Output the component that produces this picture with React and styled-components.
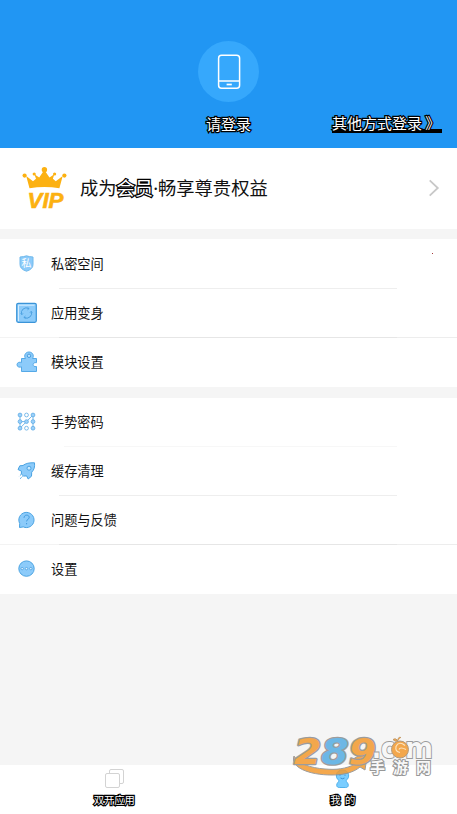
import React, { useState } from 'react';
import styled, { createGlobalStyle, css } from 'styled-components';

const GlobalStyle = createGlobalStyle`
  * {
    box-sizing: border-box;
  }

  body {
    margin: 0;
    background: #f5f5f5;
    font-family: "Noto Sans CJK SC", "Noto Sans", sans-serif;
    color: #111111;
  }

  button {
    font-family: inherit;
    border: none;
    background: none;
    padding: 0;
    cursor: pointer;
  }
`;

const outlined = css`
  color: #ffffff;
  -webkit-text-stroke: ${props => props.$stroke || 2.4}px #000000;
  paint-order: stroke fill;
`;

const Page = styled.div`
  position: relative;
  display: flex;
  flex-direction: column;
  width: 100%;
  height: 814px;
  overflow: hidden;
  background: #f5f5f5;
`;

const Header = styled.header`
  display: grid;
  grid-template-columns: 1fr 62px 1fr;
  grid-template-rows: 61px 20px;
  row-gap: 12px;
  justify-items: center;
  align-items: center;
  height: 148px;
  padding-top: 41px;
  align-content: start;
  background: #2196f3;
`;

const Avatar = styled.div`
  grid-column: 2;
  display: flex;
  align-items: center;
  justify-content: center;
  width: 61px;
  height: 61px;
  border-radius: 50%;
  background: #36a8fc;
`;

const LoginText = styled.button`
  grid-column: 2;
  grid-row: 2;
  ${outlined}
  font-size: 15px;
  line-height: 20px;
  white-space: nowrap;
`;

const OtherLogin = styled.button`
  grid-column: 3;
  grid-row: 2;
  justify-self: end;
  margin-right: 15px;
  height: 17px;
  width: 110px;
  border-bottom: 4px solid #000000;
  ${outlined}
  font-size: 15px;
  line-height: 14px;
  text-align: left;
  white-space: nowrap;
`;

const VipBar = styled.section`
  display: flex;
  align-items: center;
  height: 81px;
  padding: 0 17px 2px 22px;
  background: #ffffff;
`;

const VipTitle = styled.div`
  flex: 1;
  margin-left: 13px;
  font-size: 18.3px;
  line-height: 28px;
  white-space: nowrap;
`;

const Highlight = styled.span`
  ${outlined}
`;

const MidDot = styled.span`
  font-family: "Noto Sans", sans-serif;
`;

const Group = styled.section`
  margin-top: ${props => props.$gap}px;
  background: #ffffff;
`;

const Row = styled.div`
  display: flex;
  align-items: center;
  height: ${props => props.$height}px;
  padding-left: 15px;
  padding-bottom: ${props => (props.$line === 'none' ? 1 : 0)}px;
  border-bottom: ${props => (props.$line === 'none' ? 'none' : '1px solid transparent')};
  border-image: ${props => {
    if (props.$line === 'short') return 'linear-gradient(90deg, #ffffff 60px, #eeeeee 60px, #eeeeee 396px, #ffffff 396px) 1';
    if (props.$line === 'faint') return 'linear-gradient(90deg, #ffffff 65px, #f7f7f7 65px, #f7f7f7 396px, #ffffff 396px) 1';
    if (props.$line === 'full') return 'linear-gradient(90deg, #f3f3f3 60px, #e6e6e6 60px, #e6e6e6 396px, #ededed 396px) 1';
    return 'none';
  }};
`;

const RowLabel = styled.span`
  margin-left: 13px;
  flex: 1;
  font-size: 13.2px;
  line-height: 20px;
`;

const Dot = styled.i`
  width: 1px;
  height: 1px;
  margin: 0 24px 21px 0;
  background: #a33a3a;
`;

const TabBar = styled.nav`
  display: grid;
  grid-template-columns: 1fr 1fr;
  height: 49px;
  margin-top: auto;
  background: #ffffff;
`;

const Tab = styled.button`
  display: flex;
  flex-direction: column;
  align-items: center;
  padding-top: 3px;
`;

const TabLabel = styled.span`
  ${outlined}
  margin-top: 4px;
  font-size: 10.3px;
  line-height: 14px;
  white-space: pre;
`;

const Watermark = styled.svg`
  position: absolute;
  left: 288px;
  top: 725px;
  opacity: 0.85;
  pointer-events: none;
`;

const PhoneIcon = () => (
  <svg width="24" height="36" viewBox="0 0 24 36" fill="none" stroke="#fff" strokeWidth="1.5">
    <rect x="1.6" y="1.3" width="21" height="33" rx="3" />
    <path d="M2 27h20.5" />
    <path d="M9.6 30.5h5.2" strokeWidth="1.7" />
  </svg>
);

const VipIcon = () => (
  <svg width="45" height="44" viewBox="0 0 45 44" fill="#fcb111">
    <path d="M7.5 22.3 4.2 10l6.8 5.3 3-2.500-1.600-4.600 4.800 3.400L22.300 4l5.200 7.600 4.800-3.400-1.400 4.600 2.900 2.500 6.900-5.300-3.300 12.300Q22.500 19.500 7.500 22.300Z" />
    <circle cx="22.4" cy="3.7" r="2.7" />
    <circle cx="2.6" cy="9.6" r="2.1" />
    <circle cx="42.4" cy="9.6" r="2.1" />
    <circle cx="12.2" cy="8" r="1.6" />
    <circle cx="32.6" cy="8" r="1.6" />
    <text
      x="5.5"
      y="42"
      textLength="36"
      lengthAdjust="spacingAndGlyphs"
      fontFamily="Liberation Sans, sans-serif"
      fontSize="22"
      fontWeight="700"
      fontStyle="italic"
      stroke="#fcb111"
      strokeWidth=".6"
    >
      VIP
    </text>
  </svg>
);

const Chevron = () => (
  <svg width="12" height="18" viewBox="0 0 12 18" fill="none" stroke="#c8c8c8" strokeWidth="1.8">
    <path d="M1.7 1.3 9.8 9l-8.1 7.7" />
  </svg>
);

const RowSvg = ({ children }) => (
  <svg width="23" height="24" viewBox="0 0 23 24" fill="#8ccbfa" stroke="#4aa3e2" strokeWidth="1">
    {children}
  </svg>
);

const ShieldIcon = () => (
  <RowSvg>
    <path d="M5 5Q9 4.800 11.500 3.800 14 4.800 18 5v7.500q0 4.700-6.500 6.700-6.500-2-6.500-6.700Z" stroke="#70b9ec" />
    <text x="11.5" y="15.2" textAnchor="middle" fontSize="10" fill="#fff" stroke="none">私</text>
  </RowSvg>
);

const SwapIcon = () => (
  <RowSvg>
    <rect x="1.7" y="2.3" width="19.6" height="19" rx="1.5" stroke="#3b94d8" strokeWidth="1.2" />
    <path d="M3.500 20V4.200h16" fill="none" stroke="#d4edff" />
    <path d="M6.800 13.500a4.800 4.800 0 0 1 7-5.900M16.200 10.500a4.800 4.800 0 0 1-7 5.900" fill="none" stroke="#4a9fdf" />
    <path d="m12.500 6.300 1.700 1.300-1.800 1.300M10.500 15l-1.700 1.400 1.900 1.300M5.600 12.300l1.200 1.400 1.300-1.300M14.900 11.700l1.300-1.400 1.200 1.400" fill="none" stroke="#4a9fdf" strokeWidth=".8" />
  </RowSvg>
);

const PuzzleIcon = () => (
  <RowSvg>
    <path
      d="M6.500 8.500h4C8.500 5.500 10.500 2 14 2s5.500 3.500 3.500 6.500h4v4.200c-4.500-1-4.500 4.800 0 3.800v5h-15v-4.700c-1.500.8-4.500.4-4.500-2.100s3-3 4.500-2.100Z"
      stroke="#55a9e7"
    />
    <circle cx="14" cy="5.800" r="1.700" fill="#b9e1ff" stroke="#4197da" strokeWidth=".9" />
  </RowSvg>
);

const GestureIcon = () => (
  <RowSvg>
    <path d="M5 5v13M18 5v13M5 18.200 18 5M5 11.600h6.500" fill="none" stroke="#75b7e8" />
    {[5, 11.6, 18.2].map(y =>
      [5, 11.5, 18].map(x => (
        <circle
          key={`${x}-${y}`}
          cx={x}
          cy={y}
          r="1.9"
          fill={x === 11.5 && y !== 11.6 ? '#fff' : '#9bd0fa'}
          stroke="#60ace4"
          strokeWidth=".8"
        />
      ))
    )}
  </RowSvg>
);

const RocketIcon = () => (
  <RowSvg>
    <path d="M19.500 3.800c-5-.3-9 .6-11.500 2.700L4.800 6.800 3 10.500l3.500 1.700-.2 2.900 2.400 2 2.900-.2 1.600 3.100 3.300-2.800.2-4c2.500-2.400 3.200-5.300 2.800-9.400Z" />
    <circle cx="14" cy="9.200" r="2" fill="#c8e8ff" />
    <path d="m6 15.500-1.700 1.700M7.500 17.500 5 19.800" strokeDasharray="1.5 .7" />
  </RowSvg>
);

const QuestionIcon = () => (
  <RowSvg>
    <path d="M4.500 19.500l.2-4A7.600 7.600 0 1 1 8.300 18.900Z" />
    <path d="M9 9.800c0-3.600 5.200-3.400 5.200-.4 0 2-2.600 1.900-2.600 4M11.600 15v1.300" fill="none" stroke="#3f98dc" />
  </RowSvg>
);

const MoreIcon = () => (
  <RowSvg>
    <circle cx="11.5" cy="11.6" r="7.7" />
    {[7.2, 11.5, 15.8].map(x => (
      <circle key={x} cx={x} cy="11.6" r="1.2" fill="#e4f4ff" stroke="#3f98dc" strokeWidth=".7" />
    ))}
  </RowSvg>
);

const AppsIcon = () => (
  <svg width="21" height="21" viewBox="0 0 21 21" fill="#fff" stroke="#d3d3d3">
    <rect x="5.5" y="1.5" width="14" height="14" rx="1.5" />
    <rect x="1.5" y="5.500" width="14" height="14" rx="1.5" />
  </svg>
);

const PersonIcon = () => (
  <svg width="21" height="21" viewBox="0 0 21 21" fill="#79cdff" stroke="#4fb0ea">
    <path d="M7 12.500C2.800 10 3.300 2 10.500 2s7.700 8 3.500 10.500c.1 1.500 2.500 2.500 2.300 4.900-.2 1.500-1.100 2.100-2.600 2.100H7.300c-1.500 0-2.400-.6-2.600-2.100C4.500 15 6.900 14 7 12.500Z" />
    <path d="M8 6.700v1M13 6.700v1M8.500 10q2 1.500 4 0" fill="none" stroke="#398fd0" />
  </svg>
);

const SiteLogo = () => (
  <Watermark width="160" height="60" viewBox="0 0 160 60">
    <path
      d="M6 31c-4 11 14 19 38 19 13 0 22-3 28-8l5 3 3-20-18 11 5 3c-9 5-19 6-30 5-15-1-28-6-31-13Z"
      fill="#f39a2f"
      stroke="#8d8d8d"
    />
    <g fontFamily="DejaVu Sans, sans-serif" fontSize="35" fontWeight="700" fontStyle="italic">
      <text
        x="6"
        y="39"
        fill="#f39a2f"
        stroke="#8d8d8d"
        strokeWidth="2.6"
        strokeLinejoin="round"
        paintOrder="stroke"
        textLength="82"
        lengthAdjust="spacingAndGlyphs"
      >
        2<tspan fill="#55ade3">8</tspan>9
      </text>
    </g>
    <g
      fontFamily="DejaVu Sans, sans-serif"
      fontSize="29"
      fontWeight="700"
      fill="#f8f8f8"
      stroke="#8d8d8d"
      strokeWidth="2"
      paintOrder="stroke"
    >
      <text x="84" y="32.500" textLength="23" lengthAdjust="spacingAndGlyphs">.c</text>
      <text x="117" y="32.500" textLength="28" lengthAdjust="spacingAndGlyphs">m</text>
    </g>
    <circle cx="112" cy="24.500" r="8.500" fill="#f39a2f" stroke="#a98a66" />
    <path d="M110 15.500q-3-3-5-1 2 3 5 1ZM110 15.500q0-4 3-3" fill="#f39a2f" stroke="#b88b54" />
    <path d="M117 20.500q-6-5-9 1-1 5 4 6M118 24.500q-6-3-7 0" fill="none" stroke="#ffe1b5" strokeWidth="1.200" />
    {['手', '游', '网'].map((char, i) => (
      <text
        key={char}
        x={82 + i * 23}
        y="48"
        fontSize="15"
        fontWeight="700"
        fill="#f8f8f8"
        stroke="#858585"
        strokeWidth="2"
        paintOrder="stroke"
      >
        {char}
      </text>
    ))}
  </Watermark>
);

const privacyRows = [
  { label: '私密空间', Icon: ShieldIcon, height: 50, line: 'short', dot: true },
  { label: '应用变身', Icon: SwapIcon, height: 49, line: 'full' },
  { label: '模块设置', Icon: PuzzleIcon, height: 49, line: 'none' },
];

const toolRows = [
  { label: '手势密码', Icon: GestureIcon, height: 49, line: 'faint' },
  { label: '缓存清理', Icon: RocketIcon, height: 49, line: 'short' },
  { label: '问题与反馈', Icon: QuestionIcon, height: 49, line: 'full' },
  { label: '设置', Icon: MoreIcon, height: 49, line: 'none' },
];

const MenuGroup = ({ rows, gap }) => (
  <Group $gap={gap}>
    {rows.map(({ label, Icon, height, line, dot }) => (
      <Row key={label} $height={height} $line={line}>
        <Icon />
        <RowLabel>{label}</RowLabel>
        {dot && <Dot />}
      </Row>
    ))}
  </Group>
);

const App = () => {
  const [tab, setTab] = useState('mine');

  return (
    <>
      <GlobalStyle />
      <Page>
        <Header>
          <Avatar>
            <PhoneIcon />
          </Avatar>
          <LoginText>请登录</LoginText>
          <OtherLogin>其他方式登录 》</OtherLogin>
        </Header>

        <VipBar>
          <VipIcon />
          <VipTitle>
            成为<Highlight>会员</Highlight><MidDot>·</MidDot>畅享尊贵权益
          </VipTitle>
          <Chevron />
        </VipBar>

        <MenuGroup rows={privacyRows} gap={10} />
        <MenuGroup rows={toolRows} gap={11} />

        <TabBar>
          <Tab aria-pressed={tab === 'apps'} onClick={() => setTab('apps')}>
            <AppsIcon />
            <TabLabel>双开应用</TabLabel>
          </Tab>
          <Tab aria-pressed={tab === 'mine'} onClick={() => setTab('mine')}>
            <PersonIcon />
            <TabLabel>我  的</TabLabel>
          </Tab>
        </TabBar>
        <SiteLogo />
      </Page>
    </>
  );
};

export default App;
